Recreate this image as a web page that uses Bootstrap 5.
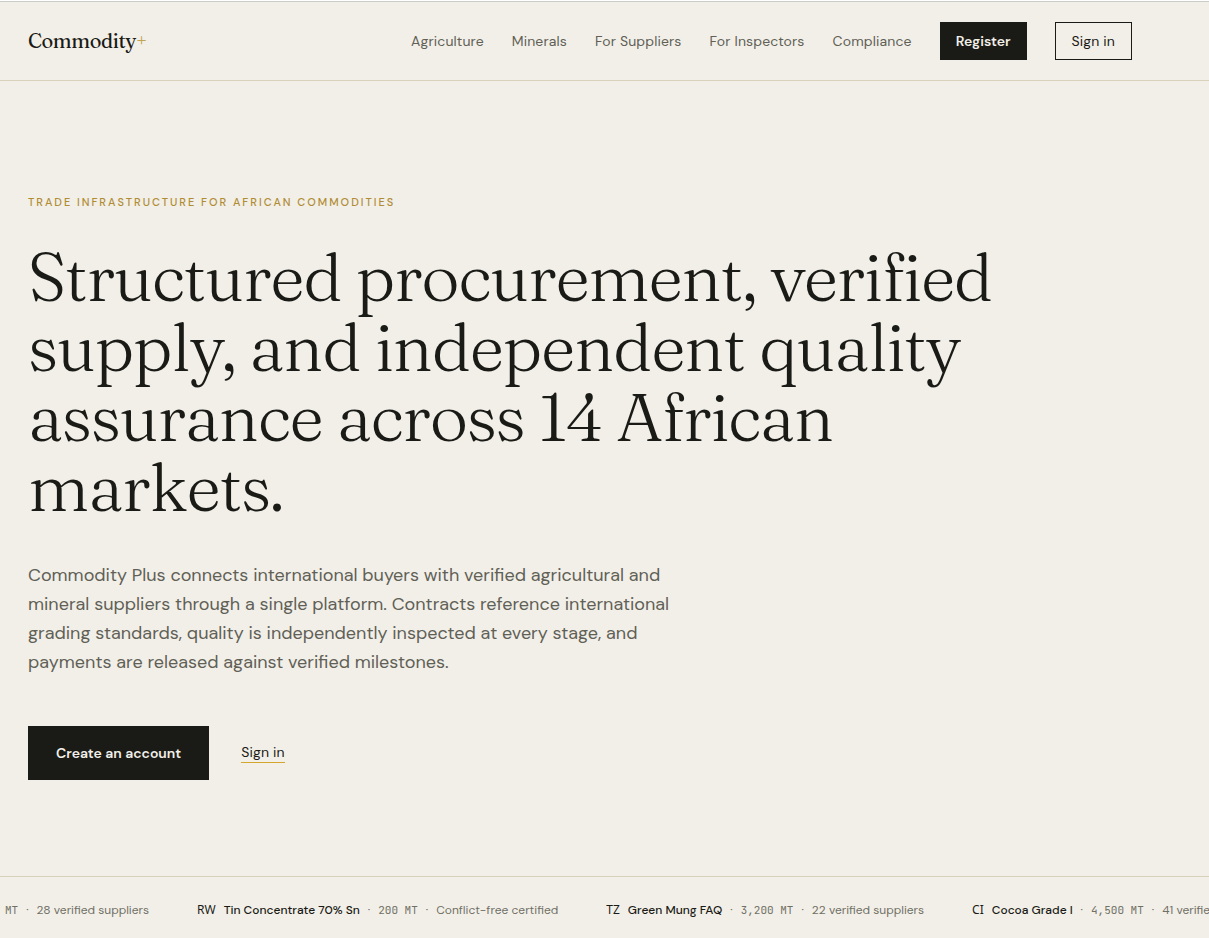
<!DOCTYPE html>
<html lang="en">
<head>
<meta charset="utf-8">
<meta name="viewport" content="width=device-width, initial-scale=1">
<title>Commodity+</title>
<link href="https://cdn.jsdelivr.net/npm/bootstrap@5.3.0/dist/css/bootstrap.min.css" rel="stylesheet">
<style>
  :root { --ink: #1a1b16; --muted: #606056; --gold: #b08d35; --paper: #f2efe8; --rule: #d8d1bc; }
  body { font-family: "DM Sans", "Open Sans", sans-serif; font-size: 14px; line-height: 20px; color: var(--ink); background: var(--paper); overflow-x: hidden; border-top: 1px solid #fff; }
  .wrap { max-width: 1160px; padding: 0 28px; }
  .site-head { border-top: 1px solid #c9ccc9; border-bottom: 1px solid var(--rule); letter-spacing: 0.01em; }
  .site-head .navbar { padding: 20px 0; }
  .site-head .navbar-brand { font: 400 20px/30px "Fraunces", "Liberation Serif", serif; letter-spacing: -0.02em; color: var(--ink); padding: 0; margin: 0; }
  .navbar-brand span { color: #c2a350; }
  .site-nav { gap: 28px; }
  .site-head .site-nav .nav-link { padding: 0; color: var(--muted); }
  .btn { --bs-btn-border-radius: 0; --bs-btn-font-size: 14px; --bs-btn-line-height: 20px; --bs-btn-padding-x: 16px; --bs-btn-padding-y: 8px; }
  .btn-ink { --bs-btn-color: #f2efe8; --bs-btn-bg: #1a1b16; --bs-btn-border-color: #1a1b16; --bs-btn-hover-color: #fff; --bs-btn-hover-bg: #33342d; --bs-btn-padding-x: 15px; font-weight: 600; }
  .btn-line { --bs-btn-color: #1a1b16; --bs-btn-border-color: #1a1b16; --bs-btn-hover-color: #f2efe8; --bs-btn-hover-bg: #1a1b16; letter-spacing: 0.01em; }
  .btn-tall { --bs-btn-padding-x: 27px; --bs-btn-padding-y: 16px; }
  .hero { padding-top: 111px; padding-bottom: 96px; }
  .eyebrow { font-size: 11px; font-weight: 500; letter-spacing: 0.18em; text-transform: uppercase; color: var(--gold); margin-bottom: 30px; }
  .hero h1 { font: 300 67px/70px "Fraunces", "Liberation Serif", serif; letter-spacing: -0.02em; max-width: 1000px; margin-bottom: 39px; }
  .intro { font-size: 18px; line-height: 29px; color: var(--muted); max-width: 660px; margin-bottom: 49px; }
  .text-cta { color: var(--ink); text-decoration: none; line-height: 19px; letter-spacing: 0.01em; border-bottom: 1px solid #d4a72c; }
  .ticker { border-top: 1px solid var(--rule); padding: 23px 0 8px; overflow: hidden; font-size: 12px; white-space: nowrap; color: #707066; }
  .ticker ul { gap: 48px; padding-left: 5px; }
  .ticker li { gap: 8px; flex: none; }
  .ticker strong { font-weight: 500; color: var(--ink); }
  .ticker abbr { font-family: "Noto Sans", sans-serif; color: var(--ink); }
  .ticker data { font: 11px/20px "JetBrains Mono", "Liberation Mono", monospace; }
</style>
</head>
<body>
<header class="site-head">
  <div class="wrap">
    <nav class="navbar navbar-expand" aria-label="Main">
      <a class="navbar-brand" href="#">Commodity<span>+</span></a>
      <div class="navbar-nav site-nav ms-auto align-items-center">
        <a class="nav-link" href="#">Agriculture</a>
        <a class="nav-link" href="#">Minerals</a>
        <a class="nav-link" href="#">For Suppliers</a>
        <a class="nav-link" href="#">For Inspectors</a>
        <a class="nav-link" href="#">Compliance</a>
        <button type="button" class="btn btn-ink">Register</button>
        <button type="button" class="btn btn-line">Sign in</button>
      </div>
    </nav>
  </div>
</header>
<main>
  <section class="wrap hero">
    <p class="eyebrow">Trade infrastructure for African commodities</p>
    <h1>Structured procurement, verified supply, and independent quality assurance across 14 African markets.</h1>
    <p class="intro">Commodity Plus connects international buyers with verified agricultural and mineral suppliers through a single platform. Contracts reference international grading standards, quality is independently inspected at every stage, and payments are released against verified milestones.</p>
    <div class="d-flex align-items-center gap-4">
      <button type="button" class="btn btn-ink btn-tall">Create an account</button>
      <a class="text-cta ms-2" href="#">Sign in</a>
    </div>
  </section>
  <section class="ticker" aria-label="Live supply">
    <ul class="list-unstyled d-flex mb-0">
      <li class="d-flex"><data>MT</data><span>·</span><span>28 verified suppliers</span></li>
      <li class="d-flex"><abbr>RW</abbr><strong>Tin Concentrate 70% Sn</strong><span>·</span><data>200 MT</data><span>·</span><span>Conflict-free certified</span></li>
      <li class="d-flex"><abbr>TZ</abbr><strong>Green Mung FAQ</strong><span>·</span><data>3,200 MT</data><span>·</span><span>22 verified suppliers</span></li>
      <li class="d-flex"><abbr>CI</abbr><strong>Cocoa Grade I</strong><span>·</span><data>4,500 MT</data><span>·</span><span>41 verified suppliers</span></li>
    </ul>
  </section>
</main>
<script src="https://cdn.jsdelivr.net/npm/bootstrap@5.3.0/dist/js/bootstrap.bundle.min.js"></script>
</body>
</html>
